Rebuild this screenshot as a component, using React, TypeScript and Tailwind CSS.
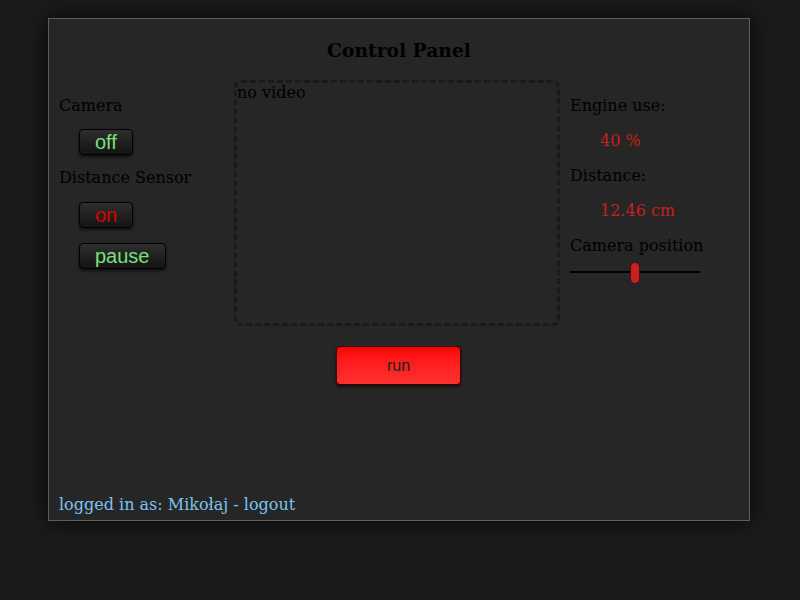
import React from "react";

const btn =
  "h-[26px] px-[15px] rounded-[4px] border border-black bg-gradient-to-b from-[#2e2e2e] to-[#141414] shadow-[0_2px_3px_rgba(0,0,0,0.6)] text-[20px] leading-none font-['Liberation_Sans',sans-serif]";

const App = () => {
  return (
    <div className="min-h-[600px] w-full bg-[#1b1b1b] pt-[18px] font-['DejaVu_Serif',serif] text-[16px] text-black">
      <div className="ml-[48px] flex h-[503px] w-[702px] flex-col border border-[#5e5e5e] bg-[#262626] px-[10px] shadow-[0_0_22px_rgba(0,0,0,0.85)]">
        <h3 className="mt-[20px] text-center text-[18.72px] font-bold leading-[22px]">
          Control Panel
        </h3>

        <div className="mt-[19px] flex">
          <div className="w-[175px] pt-[14px]">
            <div className="leading-[24px]">Camera</div>
            <button className={btn + " ml-[20px] mt-[11px] block text-[#77e077]"}>off</button>
            <div className="mt-[11px] leading-[24px]">Distance Sensor</div>
            <button className={btn + " ml-[20px] mt-[12px] block text-[#dd0000]"}>on</button>
            <button className={btn + " ml-[20px] mt-[15px] block text-[#77e077]"}>pause</button>
          </div>

          <div className="h-[246px] w-[326px] rounded-[7px] border-[3px] border-dashed border-[#1a1a1a] leading-[20px]">
            no video
          </div>

          <div className="ml-[10px] flex flex-col gap-[11px] pt-[14px] leading-[24px]">
            <div>Engine use:</div>
            <div className="pl-[30px] text-[#c42020]">40 %</div>
            <div>Distance:</div>
            <div className="pl-[30px] text-[#c42020]">12.46 cm</div>
            <div>Camera position</div>
            <div className="relative -mt-[11px] h-[26px] w-[130px]">
              <div className="absolute left-0 right-0 top-[13px] h-[2px] bg-black" />
              <div className="absolute left-[60px] top-[4px] h-[22px] w-[10px] rounded-full border border-[#5a0a0a] bg-[#c42222]" />
            </div>
          </div>
        </div>

        <button className="ml-[277px] mt-[20px] h-[39px] w-[125px] rounded-[4px] border border-[#3a0000] bg-gradient-to-b from-[#ff0000] to-[#ff3030] text-[16px] text-[#222] shadow-[0_2px_3px_rgba(0,0,0,0.6)] font-['Liberation_Sans',sans-serif]">
          run
        </button>

        <div className="mt-auto mb-[3px] leading-[24px] text-[#7cc4ee]">
          logged in as: Mikołaj - logout
        </div>
      </div>
    </div>
  );
};

export default App;
